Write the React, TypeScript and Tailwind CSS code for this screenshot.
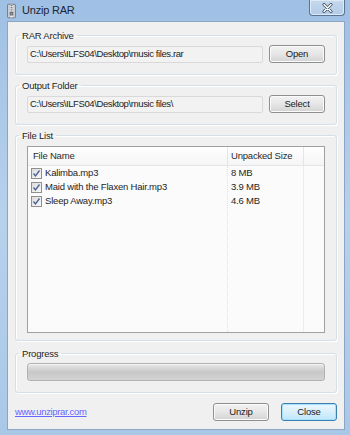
import React from "react";

const font = { fontFamily: '"Liberation Sans", Arial, sans-serif' };

function WinButton({ label, focused }: { label: string; focused?: boolean }) {
  return (
    <div
      className={
        "relative flex h-[18px] w-[56px] items-center justify-center rounded-[3px] border text-[9.5px] tracking-[-0.2px] text-[#1a1a1a] " +
        (focused
          ? "border-[#3c7fb1] bg-gradient-to-b from-[#eaf6fd] via-[#d9f0fc] to-[#bee6fd] shadow-[inset_0_0_0_1px_#a8e0fb]"
          : "border-[#8e8f8f] bg-gradient-to-b from-[#f2f2f2] via-[#e6e6e6] to-[#d3d3d3] shadow-[inset_0_0_0_1px_#fbfbfb]")
      }
    >
      {label}
    </div>
  );
}

function Group({
  title,
  children,
  className,
}: {
  title: string;
  children: React.ReactNode;
  className?: string;
}) {
  return (
    <fieldset
      className={
        "rounded-[3px] border border-[#d5dfe5] shadow-[inset_1px_1px_0_#ffffff,1px_1px_0_#ffffff] " +
        (className || "")
      }
    >
      <legend className="ml-[3px] px-[3px] text-[9.5px] leading-[13px] tracking-[-0.2px] text-[#1e1e1e]">
        {title}
      </legend>
      {children}
    </fieldset>
  );
}

function PathRow({ path, btn }: { path: string; btn: string }) {
  return (
    <div className="flex items-center gap-[6px] pl-[11px] pr-[11px] pt-[3px]">
      <div className="flex h-[17px] flex-1 items-center whitespace-nowrap rounded-[2px] border border-[#d9d9d9] bg-[#f2f2f2] pl-[2px] text-[9.5px] tracking-[-0.4px] text-[#222]">
        {path}
      </div>
      <WinButton label={btn} />
    </div>
  );
}

function Check() {
  return (
    <div className="flex h-[11px] w-[11px] shrink-0 items-center justify-center border border-[#8f8f8f] bg-gradient-to-br from-[#dcdcdc] to-[#f8f8f8]">
      <svg width="9" height="9" viewBox="0 0 9 9">
        <path d="M1.5 4.5 L3.5 7 L7.5 1.5" fill="none" stroke="#4a5f97" strokeWidth="1.3" />
      </svg>
    </div>
  );
}

const files = [
  { name: "Kalimba.mp3", size: "8 MB" },
  { name: "Maid with the Flaxen Hair.mp3", size: "3.9 MB" },
  { name: "Sleep Away.mp3", size: "4.6 MB" },
];

export default function App() {
  return (
    <div
      className="flex h-[435px] w-[350px] flex-col bg-gradient-to-b from-[#9fc0e4] via-[#b7d1ec] to-[#a9c8e8]"
      style={font}
    >
      {/* Title bar */}
      <div className="flex h-[21px] shrink-0 items-center">
        <div className="ml-[7px] flex h-[16px] w-[9px] items-center justify-center">
          <svg width="10" height="16" viewBox="0 0 10 16">
            <rect x="0.5" y="0.5" width="9" height="15" rx="1" fill="#c9cdd3" stroke="#6f757d" />
            <rect x="3.5" y="1" width="3" height="14" fill="#eceef0" />
            <path d="M4 2h2M4 4h2M4 6h2M4 8h2" stroke="#5a6068" strokeWidth="1" />
            <rect x="3.5" y="9.5" width="3" height="3" fill="#9aa0a8" stroke="#4d535a" strokeWidth="0.8" />
          </svg>
        </div>
        <div className="ml-[6px] text-[11px] tracking-[-0.2px] text-[#1b2735]">
          Unzip RAR
        </div>
        <div className="flex-1" />
        <div className="mr-[5px] flex h-[16px] w-[36px] items-center justify-center self-start rounded-b-[4px] border border-t-0 border-[#5a7493] bg-gradient-to-b from-[#c6d9ee] to-[#b2cbe6] shadow-[inset_0_0_0_1px_#dfeaf6]">
          <svg width="11" height="10" viewBox="0 0 11 10">
            <path d="M2 1.5 L9 8.5 M9 1.5 L2 8.5" stroke="#3d4a5c" strokeWidth="3" strokeLinecap="round" />
            <path d="M2 1.5 L9 8.5 M9 1.5 L2 8.5" stroke="#ffffff" strokeWidth="1.5" strokeLinecap="round" />
          </svg>
        </div>
      </div>

      {/* Client area */}
      <div className="mb-[5px] ml-[7px] mr-[5px] flex flex-1 flex-col border border-[#8aa6c4] bg-[#f0f0f0] px-[7px] pt-[7px]">
        <Group title="RAR Archive" className="h-[46px]">
          <PathRow path="C:\Users\ILFS04\Desktop\music files.rar" btn="Open" />
        </Group>
        <Group title="Output Folder" className="mt-[4px] h-[46px]">
          <PathRow path="C:\Users\ILFS04\Desktop\music files\" btn="Select" />
        </Group>
        <Group title="File List" className="mt-[4px] h-[212px]">
          <div className="mx-[11px] mt-[4px] flex h-[187px] flex-col border border-[#a0a0a0] bg-[#fbfbfb]">
            <div className="flex h-[19px] shrink-0 whitespace-nowrap border-b border-[#e2e5ea] bg-gradient-to-b from-[#ffffff] to-[#f5f5f5] text-[9.5px] tracking-[-0.2px] text-[#2a2a2a]">
              <div className="flex w-[200px] items-center border-r border-[#e2e5ea] pl-[5px]">File Name</div>
              <div className="flex w-[76px] items-center border-r border-[#e2e5ea] pl-[3px]">Unpacked Size</div>
              <div className="flex-1" />
            </div>
            <div className="flex flex-1">
              <div className="w-[200px] border-r border-dotted border-[#e0e0e0]">
                {files.map((f) => (
                  <div key={f.name} className="flex h-[14px] items-center gap-[2px] whitespace-nowrap pl-[3px] text-[9.5px] tracking-[-0.2px] text-[#1e1e1e]">
                    <Check />
                    <span className="ml-[1px]">{f.name}</span>
                  </div>
                ))}
              </div>
              <div className="w-[76px] border-r border-[#ececec]">
                {files.map((f) => (
                  <div key={f.name} className="flex h-[14px] items-center whitespace-nowrap pl-[3px] text-[9.5px] tracking-[-0.2px] text-[#1e1e1e]">
                    {f.size}
                  </div>
                ))}
              </div>
              <div className="flex-1" />
            </div>
          </div>
        </Group>
        <Group title="Progress" className="mt-[6px] h-[46px]">
          <div className="mx-[11px] mt-[3px] h-[18px] rounded-[3px] border border-[#b2b2b2] bg-gradient-to-b from-[#e9e9e9] via-[#c8c8c8] to-[#d4d4d4] shadow-[inset_0_1px_0_#f4f4f4]" />
        </Group>

        <div className="mt-[10px] flex items-center">
          <a className="text-[9.5px] tracking-[-0.35px] text-[#6666ff] underline" href="#">
            www.unziprar.com
          </a>
          <div className="flex-1" />
          <WinButton label="Unzip" />
          <div className="w-[12px]" />
          <WinButton label="Close" focused />
        </div>
      </div>
    </div>
  );
}
